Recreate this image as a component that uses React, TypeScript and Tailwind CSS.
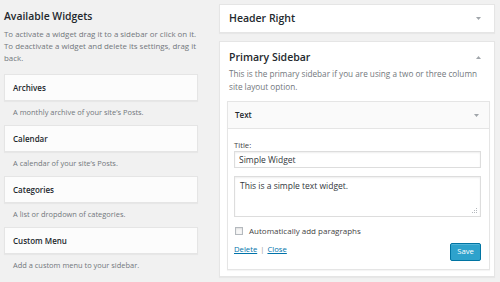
import React from "react";

const widgets = [
  { name: "Archives", desc: "A monthly archive of your site\u2019s Posts." },
  { name: "Calendar", desc: "A calendar of your site\u2019s Posts." },
  { name: "Categories", desc: "A list or dropdown of categories." },
  { name: "Custom Menu", desc: "Add a custom menu to your sidebar." },
];

function Arrow({ up = false }: { up?: boolean }) {
  return (
    <svg width="5" height="3" viewBox="0 0 5 3" className="shrink-0">
      {up ? (
        <polygon points="0,3 5,3 2.5,0" fill="#a0a5aa" />
      ) : (
        <polygon points="0,0 5,0 2.5,3" fill="#a0a5aa" />
      )}
    </svg>
  );
}

export default function App() {
  return (
    <div
      className="flex w-[500px] h-[282px] overflow-hidden bg-[#f1f1f1] text-[#444]"
      style={{ fontFamily: '"Open Sans", "Noto Sans", sans-serif' }}
    >
      {/* left column */}
      <div className="ml-[4px] w-[194px] pt-[9px]">
        <h2 className="text-[10.4px] leading-[15px] font-semibold text-[#23282d]">
          Available Widgets
        </h2>
        <p className="mt-[4px] text-[7.9px] leading-[12px] text-[#72777c]">
          To activate a widget drag it to a sidebar or click on it. To deactivate a widget and delete its settings, drag it back.
        </p>
        <div className="mt-[10px] flex flex-col">
          {widgets.map((w) => (
            <div key={w.name}>
              <div className="h-[27px] flex items-center pl-[8px] bg-[#fcfcfc] border border-[#e5e5e5] shadow-[0_1px_1px_rgba(0,0,0,0.04)]">
                <span className="text-[8px] font-semibold text-[#23282d]">{w.name}</span>
              </div>
              <div className="h-[24px] flex items-center pl-[9px] text-[7.45px] text-[#72777c]">
                {w.desc}
              </div>
            </div>
          ))}
        </div>
      </div>

      {/* right column */}
      <div className="ml-[21px] w-[276px] pt-[4px] flex flex-col gap-[8px]">
        <div className="h-[29px] flex items-center justify-between pl-[9px] pr-[13px] bg-white border border-[#e5e5e5] shadow-[0_1px_1px_rgba(0,0,0,0.04)]">
          <span className="text-[10.5px] font-semibold text-[#23282d]">Header Right</span>
          <Arrow />
        </div>

        <div className="h-[236px] bg-white border border-[#e5e5e5] shadow-[0_1px_1px_rgba(0,0,0,0.04)] pt-[8px]">
          <div className="flex items-center justify-between pl-[9px] pr-[13px]">
            <span className="text-[10.5px] leading-[15px] font-semibold text-[#23282d]">Primary Sidebar</span>
            <Arrow up />
          </div>
          <p className="pl-[9px] pr-[10px] mt-[2px] text-[8.2px] leading-[13px] text-[#72777c]">
            This is the primary sidebar if you are using a two or three column site layout option.
          </p>

          <div className="ml-[7px] mr-[4px] mt-[8px] border border-[#e5e5e5] shadow-[0_1px_1px_rgba(0,0,0,0.04)]">
            <div className="h-[27px] flex items-center justify-between pl-[7px] pr-[10px] bg-[#fafafa] border-b border-[#e5e5e5]">
              <span className="text-[8px] font-semibold text-[#23282d]">Text</span>
              <Arrow />
            </div>
            <div className="bg-white pl-[6px] pr-[8px] pt-[11px] pb-[8px]">
              <label className="block text-[7.7px] leading-[10px] text-[#444]">Title:</label>
              <input
                readOnly
                value="Simple Widget"
                className="mt-[1px] block w-full h-[17px] px-[4px] border border-[#ddd] shadow-[inset_0_1px_2px_rgba(0,0,0,0.07)] text-[8.5px] text-[#32373c] outline-none"
                style={{ fontFamily: '"Open Sans", "Noto Sans", sans-serif' }}
              />
              <div className="relative mt-[8px]">
                <textarea
                  readOnly
                  value="This is a simple text widget."
                  className="block w-full h-[41px] px-[5px] py-[3px] resize-none border border-[#ddd] shadow-[inset_0_1px_2px_rgba(0,0,0,0.07)] text-[8.5px] leading-[11px] text-[#32373c] outline-none"
                  style={{ fontFamily: '"Open Sans", "Noto Sans", sans-serif' }}
                />
                <svg width="6" height="6" viewBox="0 0 6 6" className="absolute right-[3px] bottom-[3px]">
                  <rect x="4" y="0" width="1" height="1" fill="#b4b9be" />
                  <rect x="2" y="2" width="1" height="1" fill="#b4b9be" />
                  <rect x="4" y="2" width="1" height="1" fill="#b4b9be" />
                  <rect x="0" y="4" width="1" height="1" fill="#b4b9be" />
                  <rect x="2" y="4" width="1" height="1" fill="#b4b9be" />
                  <rect x="4" y="4" width="1" height="1" fill="#b4b9be" />
                </svg>
              </div>
              <div className="mt-[9px] flex items-center gap-[6px] pl-[1px]">
                <span className="w-[8px] h-[8px] border border-[#b4b9be] bg-[#f7f7f7] shadow-[inset_0_1px_2px_rgba(0,0,0,0.1)]" />
                <span className="text-[8px] leading-[10px] text-[#444]">Automatically add paragraphs</span>
              </div>
              <div className="mt-[7px] flex items-start justify-between">
                <div className="pt-[1px] text-[7.7px] leading-[10px] text-[#999]">
                  <a className="text-[#0073aa] underline">Delete</a>
                  <span className="mx-[3px]">|</span>
                  <a className="text-[#0073aa] underline">Close</a>
                </div>
                <button className="w-[31px] h-[18px] bg-[#2ea2cc] border border-[#0074a2] rounded-[2px] shadow-[inset_0_1px_0_rgba(120,200,230,0.5)] text-[7.7px] text-white">
                  Save
                </button>
              </div>
            </div>
          </div>
        </div>
      </div>
    </div>
  );
}
